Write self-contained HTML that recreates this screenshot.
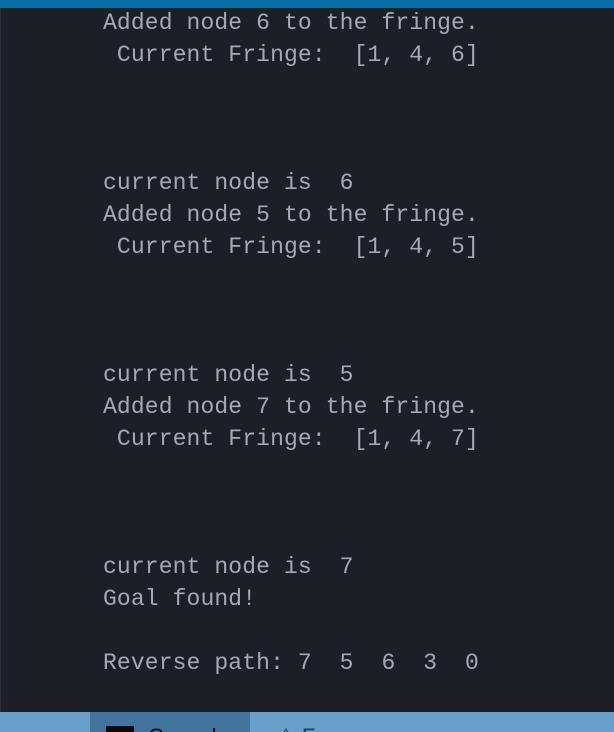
<!DOCTYPE html>
<html><head><meta charset="utf-8"><style>
html,body{margin:0;padding:0;}
body{width:614px;height:732px;overflow:hidden;background:#1b2028;position:relative;}
.top{position:absolute;left:0;top:0;width:614px;height:8px;background:#0a6ea6;}
.lb{position:absolute;left:0;top:8px;width:1px;height:704px;background:#2a313a;}
pre{position:absolute;left:103px;top:7px;margin:0;font-family:"Liberation Mono",monospace;font-size:23px;line-height:32px;letter-spacing:0.12px;color:#a2aab3;}
.bar{position:absolute;left:0;top:712px;width:614px;height:20px;background:#6a9fcc;overflow:hidden;}
.tab{position:absolute;left:90px;top:0;width:160px;height:20px;background:#41739c;}
.ico{position:absolute;left:106px;top:14px;width:28px;height:10px;background:#0b0b0b;}
.t1{position:absolute;left:148px;top:12px;font:22px "Liberation Sans",sans-serif;color:#0b0b0b;}
.t2{position:absolute;left:276px;top:12px;font:22px "Liberation Sans",sans-serif;color:#0f3f66;}
</style></head><body>
<div class="top"></div><div class="lb"></div>
<pre>Added node 6 to the fringe.
 Current Fringe:  [1, 4, 6]



current node is  6
Added node 5 to the fringe.
 Current Fringe:  [1, 4, 5]



current node is  5
Added node 7 to the fringe.
 Current Fringe:  [1, 4, 7]



current node is  7
Goal found!

Reverse path: 7  5  6  3  0</pre>
<div class="bar"><div class="tab"></div><div class="ico"></div><div class="t1">Console</div><div class="t2">⚠ F</div></div>
</body></html>
